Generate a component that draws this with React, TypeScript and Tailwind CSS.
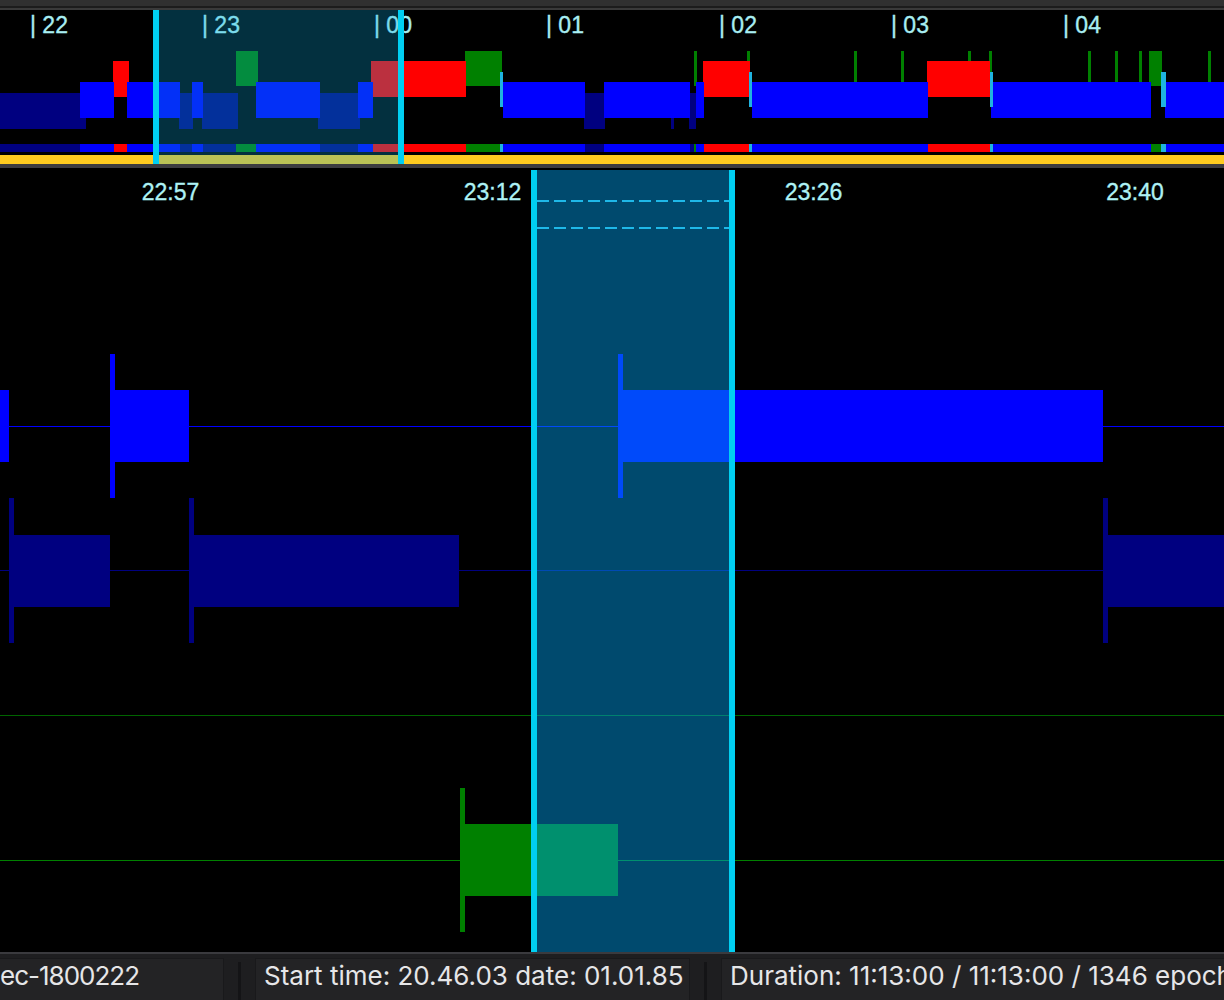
import React from "react";

type Stage = "navy" | "blue" | "red" | "green" | "cyan";

const stageStyle: Record<Stage, { fill: string; y: number; h: number }> = {
  green: { fill: "#008000", y: 51, h: 35 },
  red: { fill: "#ff0000", y: 61, h: 36 },
  cyan: { fill: "#1fb3e0", y: 72, h: 35 },
  blue: { fill: "#0000ff", y: 82, h: 36 },
  navy: { fill: "#000080", y: 93, h: 36 },
};

// overview epochs, in screen pixels: [from, to, stage]
const overview: [number, number, Stage][] = [
  [0, 86, "navy"],
  [80, 114, "blue"],
  [113, 129, "red"],
  [127, 180, "blue"],
  [179, 193, "navy"],
  [192, 203, "blue"],
  [202, 238, "navy"],
  [236, 258, "green"],
  [256, 320, "blue"],
  [318, 360, "navy"],
  [358, 373, "blue"],
  [371, 466, "red"],
  [465, 502, "green"],
  [500, 503, "cyan"],
  [503, 585, "blue"],
  [584, 605, "navy"],
  [604, 690, "blue"],
  [671, 674, "navy"],
  [694, 697, "green"],
  [689, 696, "navy"],
  [696, 704, "blue"],
  [703, 750, "red"],
  [747, 750, "green"],
  [749, 752, "cyan"],
  [752, 928, "blue"],
  [854, 857, "green"],
  [901, 904, "green"],
  [927, 990, "red"],
  [968, 971, "green"],
  [989, 992, "green"],
  [990, 993, "cyan"],
  [991, 1151, "blue"],
  [1088, 1091, "green"],
  [1115, 1118, "green"],
  [1139, 1142, "green"],
  [1149, 1162, "green"],
  [1161, 1166, "cyan"],
  [1165, 1224, "blue"],
  [1208, 1211, "green"],
];

const paintOrder: Stage[] = ["navy", "green", "red", "blue", "cyan"];

const hourLabels = [
  { x: 30, text: "| 22" },
  { x: 202, text: "| 23" },
  { x: 374, text: "| 00" },
  { x: 546, text: "| 01" },
  { x: 719, text: "| 02" },
  { x: 891, text: "| 03" },
  { x: 1063, text: "| 04" },
];

const timeLabels = [
  { x: 170.5, text: "22:57" },
  { x: 492.5, text: "23:12" },
  { x: 813.5, text: "23:26" },
  { x: 1135, text: "23:40" },
];

// detail rows: line y, colour, and blocks with an optional start tick
const rows = [
  {
    y: 426,
    color: "#0000ff",
    bar: [390, 72],
    tick: [354, 144],
    blocks: [
      { from: 0, to: 9, tick: false },
      { from: 110, to: 189, tick: true },
      { from: 618, to: 1103, tick: true },
    ],
  },
  {
    y: 570,
    color: "#000080",
    bar: [535, 72],
    tick: [498, 145],
    blocks: [
      { from: 9, to: 110, tick: true },
      { from: 189, to: 459, tick: true },
      { from: 1103, to: 1224, tick: true },
    ],
  },
  { y: 715, color: "#006400", bar: [0, 0], tick: [0, 0], blocks: [] },
  {
    y: 860,
    color: "#008000",
    bar: [824, 72],
    tick: [788, 144],
    blocks: [{ from: 460, to: 618, tick: true }],
  },
];

const chartFont = "'Liberation Sans', Arial, sans-serif";

const Overview = () => (
  <div className="relative h-[154px] shrink-0 bg-black">
    <svg width={1224} height={154} viewBox="0 10 1224 154" className="block">
      {hourLabels.map((l) => (
        <text
          key={l.text}
          x={l.x}
          y={33}
          fontSize={23}
          fill="#a8eef2"
          stroke="#a8eef2"
          strokeWidth={0.35}
          fontFamily={chartFont}
        >
          {l.text}
        </text>
      ))}
      {paintOrder.map((stage) =>
        overview
          .filter((s) => s[2] === stage)
          .map(([a, b], i) => (
            <rect
              key={`${stage}-${i}`}
              x={a}
              y={stageStyle[stage].y}
              width={b - a}
              height={stageStyle[stage].h}
              fill={stageStyle[stage].fill}
            />
          ))
      )}
      {paintOrder.map((stage) =>
        overview
          .filter((s) => s[2] === stage)
          .map(([a, b], i) => (
            <rect key={`strip-${stage}-${i}`} x={a} y={144} width={b - a} height={8} fill={stageStyle[stage].fill} />
          ))
      )}
      <rect x={0} y={155} width={1224} height={9} fill="#fecb20" />
    </svg>
    <div className="absolute left-[153px] top-0 bottom-0 flex w-[251px]">
      <div className="w-[6px] bg-[#00cff2]" />
      <div className="flex-1 bg-[rgba(11,171,225,0.28)]" />
      <div className="w-[6px] bg-[#00cff2]" />
    </div>
  </div>
);

const Detail = () => (
  <div className="relative flex-1 bg-black">
    <svg width={1224} height={784} viewBox="0 168 1224 784" className="block">
      {timeLabels.map((l) => (
        <text
          key={l.text}
          x={l.x}
          y={200}
          textAnchor="middle"
          fontSize={23}
          fill="#aef2f5"
          stroke="#aef2f5"
          strokeWidth={0.35}
          fontFamily={chartFont}
        >
          {l.text}
        </text>
      ))}
      {rows.map((r) => (
        <g key={r.y}>
          <rect x={0} y={r.y} width={1224} height={1} fill={r.color} />
          {r.blocks.map((b) => (
            <g key={b.from}>
              {b.tick ? <rect x={b.from} y={r.tick[0]} width={5} height={r.tick[1]} fill={r.color} /> : null}
              <rect x={b.from} y={r.bar[0]} width={b.to - b.from} height={r.bar[1]} fill={r.color} />
            </g>
          ))}
        </g>
      ))}
    </svg>
    <div className="absolute left-[531px] top-[2px] bottom-0 flex w-[204px]">
      <div className="w-[6px] bg-[#00cff2]" />
      <div className="relative flex-1 bg-[rgba(0,164,244,0.45)]">
        <svg width={192} height={60} className="absolute left-0 top-0">
          <line x1={0} y1={31} x2={192} y2={31} stroke="#1fb8e8" strokeWidth={2} strokeDasharray="12 5" />
          <line x1={0} y1={58} x2={192} y2={58} stroke="#1fb8e8" strokeWidth={2} strokeDasharray="12 5" />
        </svg>
      </div>
      <div className="w-[6px] bg-[#00cff2]" />
    </div>
  </div>
);

const StatusBox = ({ className, children }: { className: string; children: React.ReactNode }) => (
  <div
    className={`shrink-0 overflow-hidden whitespace-nowrap border border-[#19191b] bg-[#232325] pt-[2px] text-[26px] leading-[30px] text-[#e6e6e8] ${className}`}
  >
    {children}
  </div>
);

const Separator = () => (
  <div className="mx-[14px] flex w-[3px] shrink-0 pt-[4px]">
    <div className="w-full bg-[#141416]" />
  </div>
);

const StatusBar = () => (
  <div className="flex h-[50px] shrink-0 overflow-hidden border-t-2 border-[#3a3a3e] bg-[#1e1e20] pt-[4px] font-['Inter',sans-serif]">
    <StatusBox className="w-[224px] border-l-0 pl-0 tracking-[-1px]">ec-1800222</StatusBox>
    <Separator />
    <StatusBox className="w-[435px] pl-[8px]">Start time: 20.46.03 date: 01.01.85</StatusBox>
    <Separator />
    <StatusBox className="w-[560px] border-r-0 pl-[8px]">Duration: 11:13:00 / 11:13:00 / 1346 epochs</StatusBox>
  </div>
);

export default function App() {
  return (
    <div className="flex h-[1000px] w-[1224px] flex-col overflow-hidden bg-black">
      <div className="flex shrink-0 flex-col">
        <div className="h-[6px] bg-[#303030]" />
        <div className="h-[2px] bg-[#1c1c1c]" />
        <div className="h-[2px] bg-[#3a3a3a]" />
      </div>
      <Overview />
      <div className="h-[4px] shrink-0 bg-[#3c3c40]" />
      <Detail />
      <StatusBar />
    </div>
  );
}
